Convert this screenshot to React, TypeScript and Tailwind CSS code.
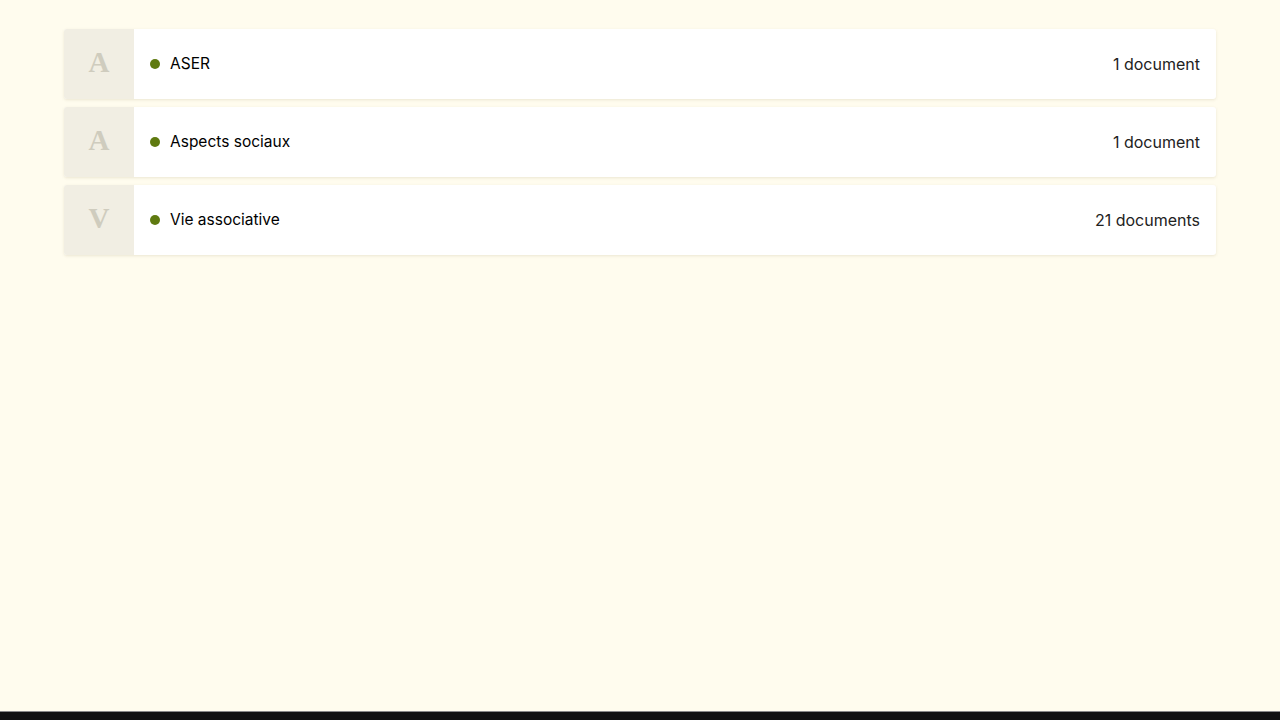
const categories = [
  { letter: 'A', name: 'ASER', count: '1 document' },
  { letter: 'A', name: 'Aspects sociaux', count: '1 document' },
  { letter: 'V', name: 'Vie associative', count: '21 documents' },
]

export default function App() {
  return (
    <div className="min-h-screen flex flex-col bg-[#fffcee]" style={{ fontFamily: 'Inter, "Noto Sans", sans-serif' }}>
      <main className="flex-1 px-16 pt-[29px]">
        {/* Category list */}
        <ul className="flex flex-col gap-2">
          {categories.map((cat) => (
            <li
              key={cat.name}
              className="flex h-[70px] bg-white rounded-[3px] overflow-hidden shadow-[0_1px_3px_rgba(120,110,60,0.15)]"
            >
              <div
                className="w-[70px] shrink-0 flex items-center justify-center pb-[2px] bg-[#f1eee3] text-[#cfccbe] text-[29px] font-semibold"
                style={{ fontFamily: '"Liberation Serif", "DejaVu Serif", serif' }}
              >
                {cat.letter}
              </div>
              <div className="flex-1 flex items-center px-4 pb-[1px]">
                <span className="w-2.5 h-2.5 rounded-full bg-[#5f7a10] mr-[10px]"></span>
                <span className="text-[15.5px] text-black">{cat.name}</span>
                <span className="ml-auto text-[16px] text-[#222]">{cat.count}</span>
              </div>
            </li>
          ))}
        </ul>
      </main>
      <footer className="h-[9px] bg-[#111] border-t border-[#888]"></footer>
    </div>
  )
}
